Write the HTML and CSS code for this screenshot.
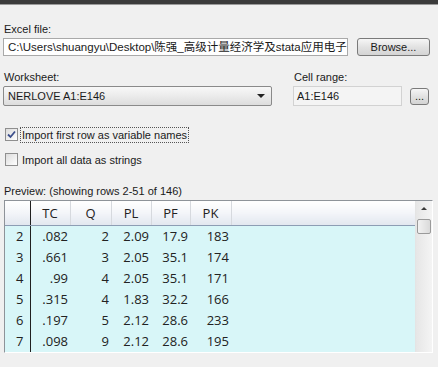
FILE: index.html
```html
<!DOCTYPE html>
<html lang="en">
<head>
    <meta charset="UTF-8">
    <title>Import Excel</title>
    <link rel="stylesheet" href="styles.css">
</head>
<body>
    <div class="topbar"></div>

    <div class="panel">
        <div class="label first">Excel file:</div>
        <div class="file-row">
            <div class="textbox file-box">C:\Users\shuangyu\Desktop\陈强_高级计量经济学及stata应用电子</div>
            <button type="button" class="btn browse">Browse...</button>
        </div>

        <div class="sheet-row">
            <div class="sheet-col">
                <div class="label">Worksheet:</div>
                <div class="select">
                    <span>NERLOVE A1:E146</span>
                    <span class="arrow"></span>
                </div>
            </div>
            <div class="range-col">
                <div class="label">Cell range:</div>
                <div class="range-line">
                    <div class="textbox range-box">A1:E146</div>
                    <button type="button" class="btn dots">...</button>
                </div>
            </div>
        </div>

        <label class="check first-check">
            <span class="box checked">
                <svg width="9" height="9" viewBox="0 0 9 9"><path d="M1 4.5 L3.5 7 L8 1.5" fill="none" stroke="#3c4f8c" stroke-width="1.8"/></svg>
            </span>
            <span class="check-text focus">Import first row as variable names</span>
        </label>
        <label class="check">
            <span class="box"></span>
            <span class="check-text">Import all data as strings</span>
        </label>

        <div class="label preview">Preview: (showing rows 2-51 of 146)</div>

        <div class="grid">
            <div class="table-wrap">
                <table class="data">
                    <colgroup>
                        <col class="c-row"><col class="c-tc"><col class="c-q"><col class="c-pl"><col class="c-pf"><col class="c-pk"><col>
                    </colgroup>
                    <thead>
                        <tr><th class="rowhead"></th><th>TC</th><th>Q</th><th>PL</th><th>PF</th><th>PK</th><th class="filler"></th></tr>
                    </thead>
                    <tbody>
                        <tr><td class="rowhead">2</td><td>.082</td><td>2</td><td>2.09</td><td>17.9</td><td>183</td><td></td></tr>
                        <tr><td class="rowhead">3</td><td>.661</td><td>3</td><td>2.05</td><td>35.1</td><td>174</td><td></td></tr>
                        <tr><td class="rowhead">4</td><td>.99</td><td>4</td><td>2.05</td><td>35.1</td><td>171</td><td></td></tr>
                        <tr><td class="rowhead">5</td><td>.315</td><td>4</td><td>1.83</td><td>32.2</td><td>166</td><td></td></tr>
                        <tr><td class="rowhead">6</td><td>.197</td><td>5</td><td>2.12</td><td>28.6</td><td>233</td><td></td></tr>
                        <tr><td class="rowhead">7</td><td>.098</td><td>9</td><td>2.12</td><td>28.6</td><td>195</td><td></td></tr>
                    </tbody>
                </table>
            </div>
            <div class="vscroll">
                <div class="up"></div>
                <div class="thumb"></div>
            </div>
        </div>
    </div>
</body>
</html>
```

FILE: styles.css
```css
body {
    margin: 0;
    background: #f0f0f0;
    font-family: 'Liberation Sans', 'Noto Sans CJK SC', sans-serif;
    font-size: 11px;
    color: #1a1a1a;
    overflow: hidden;
}

.topbar {
    height: 4px;
    background: #3b3b3b;
    border-bottom: 1px solid #9a9a9a;
}

.panel {
    padding: 0 0 0 3px;
}

.label {
    line-height: 14px;
    padding-left: 1px;
}

.label.first {
    margin-top: 17px;
    margin-bottom: 2px;
}

.file-row {
    display: flex;
    height: 18px;
}

.textbox {
    box-sizing: border-box;
    background: #ffffff;
    border: 1px solid #a9a9a9;
    line-height: 16px;
    padding-left: 4px;
    white-space: nowrap;
    overflow: hidden;
}

.file-box {
    width: 345px;
    font-size: 11.5px;
}

.btn {
    box-sizing: border-box;
    font-family: inherit;
    font-size: 11px;
    color: #1a1a1a;
    border: 1px solid #7a7a7a;
    border-radius: 3px;
    background: linear-gradient(#f6f6f6, #e2e2e2 50%, #d4d4d4);
    padding: 0;
}

.browse {
    width: 73px;
    height: 18px;
    margin-left: 9px;
}

.sheet-row {
    display: flex;
    margin-top: 14px;
}

.sheet-col {
    width: 269px;
}

.sheet-col .label,
.range-col .label {
    margin-bottom: 2px;
}

.select {
    box-sizing: border-box;
    height: 20px;
    border: 1px solid #8a8a8a;
    border-radius: 2px;
    background: linear-gradient(#f8f8f8, #ebebeb 50%, #dddddd);
    display: flex;
    align-items: center;
    justify-content: space-between;
    padding: 0 6px 0 4px;
}

.arrow {
    width: 0;
    height: 0;
    border-left: 4px solid transparent;
    border-right: 4px solid transparent;
    border-top: 4px solid #222222;
}

.range-col {
    margin-left: 21px;
}

.range-line {
    display: flex;
    align-items: center;
}

.range-box {
    width: 109px;
    height: 20px;
    line-height: 18px;
    background: #f4f4f4;
    border-color: #d2d2d2;
    padding-left: 3px;
}

.dots {
    width: 19px;
    height: 17px;
    margin-left: 8px;
    line-height: 10px;
}

.check {
    display: flex;
    align-items: center;
    height: 17px;
    margin-left: 2px;
}

.first-check {
    margin-top: 20px;
}

.check + .check {
    margin-top: 8px;
}

.box {
    box-sizing: border-box;
    width: 13px;
    height: 13px;
    border: 1px solid #8f8f8f;
    background: linear-gradient(135deg, #dcdcdc, #ffffff);
    display: flex;
    align-items: center;
    justify-content: center;
}

.check-text {
    margin-left: 2px;
    padding: 1px 1px;
    border: 1px dotted transparent;
}

.check-text.focus {
    border-color: #555555;
}

.label.preview {
    margin-top: 16px;
    margin-bottom: 2px;
}

.grid {
    display: flex;
    box-sizing: border-box;
    width: 429px;
    height: 153px;
    margin-left: 1px;
    border: 1px solid #8e9399;
    border-right-color: #ffffff;
    border-bottom-color: #ffffff;
    background: #d8f6f8;
}

.table-wrap {
    flex: 1;
    overflow: hidden;
}

.data {
    width: 100%;
    border-collapse: collapse;
    table-layout: fixed;
    font-family: 'Open Sans', sans-serif;
    font-size: 13px;
    line-height: 17px;
    color: #222222;
}

.c-row { width: 25px; }
.c-tc { width: 40px; }
.c-q { width: 41px; }
.c-pl { width: 40px; }
.c-pf { width: 39px; }
.c-pk { width: 41px; }

.data th {
    height: 24px;
    padding: 0;
    font-weight: normal;
    text-align: center;
    background: linear-gradient(#ffffff, #f3f5f9 50%, #e2e7ef);
    border-right: 1px solid #d6d9de;
    border-bottom: 1px solid #8d9db4;
}

.data th.filler {
    border-right: none;
}

.data td {
    height: 21px;
    padding: 0 2px 0 0;
    text-align: right;
    white-space: nowrap;
}

.data .rowhead {
    border-right: 1px solid #202020;
    padding-right: 6px;
}

.vscroll {
    width: 16px;
    border-left: 1px solid #e4e4e4;
    background: linear-gradient(90deg, #e6e6e6, #f4f4f4);
    display: flex;
    flex-direction: column;
    align-items: center;
}

.up {
    width: 0;
    height: 0;
    margin-top: 6px;
    border-left: 3px solid transparent;
    border-right: 3px solid transparent;
    border-bottom: 3px solid #3a3a3a;
}

.thumb {
    box-sizing: border-box;
    width: 14px;
    height: 15px;
    margin-top: 9px;
    border: 1px solid #9a9a9a;
    border-radius: 2px;
    background: linear-gradient(90deg, #f2f2f2, #dadada);
}
```
